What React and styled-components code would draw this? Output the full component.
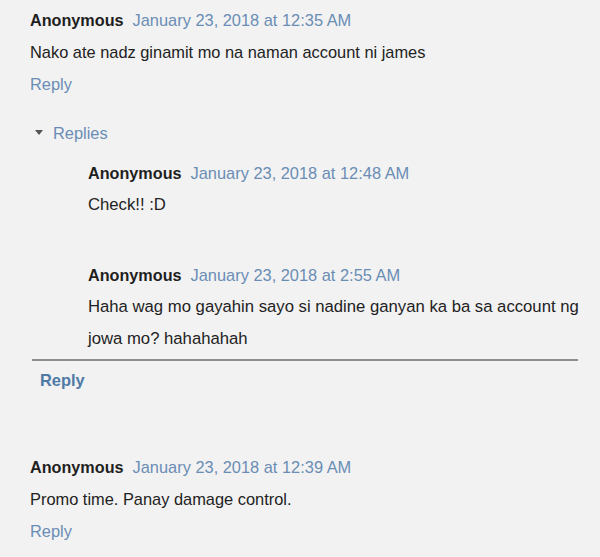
import React from 'react';
import styled, { createGlobalStyle } from 'styled-components';

const GlobalStyle = createGlobalStyle`
  html, body {
    margin: 0;
    padding: 0;
    background: #f2f2f2;
  }
  body {
    font-family: "Liberation Sans", Arial, sans-serif;
    font-size: 16.4px;
    color: #222;
  }
`;

const Page = styled.div`
  width: 600px;
  height: 557px;
  box-sizing: border-box;
  padding: 4px 0 0 30px;
  background: #f2f2f2;
  overflow: hidden;
`;

const Comment = styled.div`
  display: flex;
  flex-direction: column;
  margin-top: ${p => p.$gap || 0}px;
`;

const Header = styled.div`
  display: flex;
  align-items: baseline;
  gap: 9px;
  line-height: 32px;
  white-space: nowrap;
`;

const Author = styled.span`
  font-weight: 700;
  color: #1f1f1f;
  font-size: 16.2px;
`;

const Stamp = styled.a`
  color: #6a8db5;
  font-size: 16.4px;
  text-decoration: none;
`;

const Body = styled.p`
  margin: 0;
  line-height: 32px;
  color: #222;
  font-size: ${p => (p.$nested ? 16.7 : 16.4)}px;
`;

const ReplyLink = styled.a`
  align-self: flex-start;
  line-height: 32px;
  color: #6a8db5;
  text-decoration: none;
`;

const RepliesToggle = styled.div`
  display: flex;
  align-items: center;
  gap: 10px;
  margin-top: 17px;
  padding-left: 5px;
  line-height: 32px;
  color: #6a8db5;
`;

const Caret = styled.span`
  width: 0;
  height: 0;
  border-left: 4px solid transparent;
  border-right: 4px solid transparent;
  border-top: 5px solid #555;
  margin-top: -2px;
`;

const Thread = styled.div`
  margin-top: 8px;
  padding-left: 58px;
  width: 494px;
`;

const Divider = styled.hr`
  margin: 4px 0 0 2px;
  width: 546px;
  border: none;
  height: 2px;
  background: #8d8d8d;
`;

const ThreadReply = styled.a`
  display: block;
  margin: 3px 0 0 10px;
  line-height: 32px;
  font-weight: 700;
  color: #4f7aa6;
  text-decoration: none;
`;

const CommentBlock = ({ date, text, gap, nested, reply = true }) => (
  <Comment $gap={gap}>
    <Header>
      <Author>Anonymous</Author>
      <Stamp>{date}</Stamp>
    </Header>
    <Body $nested={nested}>{text}</Body>
    {reply && <ReplyLink>Reply</ReplyLink>}
  </Comment>
);

export default function App() {
  return (
    <>
      <GlobalStyle />
      <Page>
        <CommentBlock
          date="January 23, 2018 at 12:35 AM"
          text="Nako ate nadz ginamit mo na naman account ni james"
        />
        <RepliesToggle>
          <Caret />
          <span>Replies</span>
        </RepliesToggle>
        <Thread>
          <CommentBlock nested date="January 23, 2018 at 12:48 AM" text="Check!! :D" reply={false} />
          <CommentBlock
            nested
            gap={38}
            date="January 23, 2018 at 2:55 AM"
            text="Haha wag mo gayahin sayo si nadine ganyan ka ba sa account ng jowa mo? hahahahah"
            reply={false}
          />
        </Thread>
        <Divider />
        <ThreadReply>Reply</ThreadReply>
        <CommentBlock
          gap={55}
          date="January 23, 2018 at 12:39 AM"
          text="Promo time. Panay damage control."
        />
      </Page>
    </>
  );
}
